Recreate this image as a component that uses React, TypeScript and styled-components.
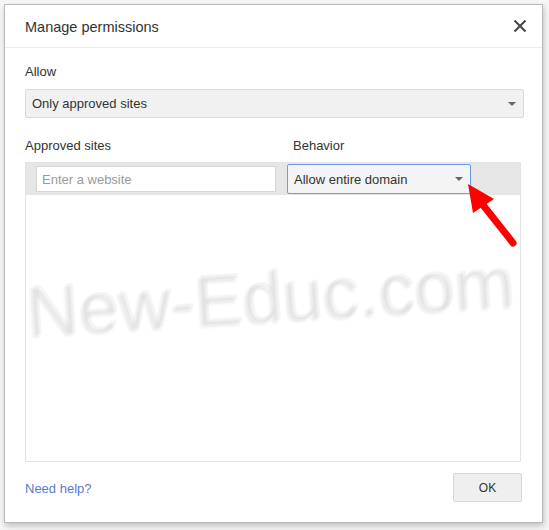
import React from "react";
import styled, { createGlobalStyle } from "styled-components";

const Global = createGlobalStyle`
  html, body { margin: 0; padding: 0; background: #f6f6f6; }
  body { font-family: "Liberation Sans", Arial, sans-serif; }
`;

const Page = styled.div`
  position: relative;
  width: 549px;
  height: 530px;
  padding: 4px 0 0 4px;
  box-sizing: border-box;
  overflow: hidden;
`;

const Dialog = styled.div`
  width: 539px;
  height: 519px;
  box-sizing: border-box;
  background: #fff;
  border: 1px solid #b9b9b9;
  box-shadow: 1px 3px 6px rgba(0, 0, 0, 0.22);
  display: flex;
  flex-direction: column;
`;

const Header = styled.div`
  height: 42px;
  display: flex;
  align-items: center;
  justify-content: space-between;
  padding: 0 14px 0 20px;
  border-bottom: 1px solid #ededed;
`;

const Title = styled.div`
  font-size: 14.5px;
  color: #333;
  padding-top: 2px;
`;

const Close = styled.button`
  border: none;
  background: none;
  padding: 0;
  width: 16px;
  height: 16px;
  display: flex;
  align-items: center;
  justify-content: center;
  cursor: pointer;
`;

const Body = styled.div`
  flex: 1;
  display: flex;
  flex-direction: column;
  padding: 0 18px 0 20px;
`;

const Label = styled.div<{ $top: number }>`
  font-size: 13px;
  color: #333;
  margin-top: ${(p) => p.$top}px;
  line-height: 16px;
`;

const Select = styled.div<{ $focused?: boolean }>`
  box-sizing: border-box;
  display: flex;
  align-items: center;
  justify-content: space-between;
  font-size: 13px;
  color: #333;
  background: ${(p) => (p.$focused ? "#f4f4f4" : "#f1f1f1")};
  border: 1px solid ${(p) => (p.$focused ? "#6d9be8" : "#dadada")};
  border-radius: 2px;
  padding: 0 7px 0 6px;
`;

const TopSelect = styled(Select)`
  margin-top: 9px;
  height: 29px;
`;

const Caret = styled.span`
  width: 0;
  height: 0;
  border-left: 4px solid transparent;
  border-right: 4px solid transparent;
  border-top: 4px solid #666;
`;

const Columns = styled.div`
  display: grid;
  grid-template-columns: 268px 1fr;
  margin-top: 20px;
  width: 496px;
`;

const List = styled.div`
  position: relative;
  margin-top: 8px;
  width: 496px;
  height: 300px;
  box-sizing: border-box;
  border: 1px solid #e3e3e3;
  display: flex;
  flex-direction: column;
`;

const ListHead = styled.div`
  height: 32px;
  background: #e6e6e6;
  display: grid;
  grid-template-columns: 240px 184px;
  column-gap: 11px;
  align-items: center;
  padding-left: 10px;
`;

const Input = styled.div`
  box-sizing: border-box;
  height: 26px;
  background: #fff;
  border: 1px solid #d6d6d6;
  font-size: 13px;
  color: #9a9a9a;
  display: flex;
  align-items: center;
  padding-left: 5px;
`;

const BehaviorSelect = styled(Select)`
  height: 30px;
`;

const Watermark = styled.div`
  position: absolute;
  left: 5px;
  top: 106px;
  font-size: 72px;
  line-height: 82px;
  color: rgba(0, 0, 0, 0.035);
  text-shadow: -3px 3px 3px rgba(0, 0, 0, 0.08);
  transform: rotate(-3.5deg);
  transform-origin: left bottom;
  white-space: nowrap;
  pointer-events: none;
`;

const Footer = styled.div`
  display: flex;
  align-items: center;
  justify-content: space-between;
  margin-top: 11px;
  width: 497px;
`;

const Help = styled.a`
  font-size: 13px;
  color: #5b78d8;
  text-decoration: none;
  margin-top: 2px;
`;

const OkButton = styled.button`
  width: 69px;
  height: 29px;
  box-sizing: border-box;
  background: #efefef;
  border: 1px solid #d7d7d7;
  border-radius: 2px;
  font-family: "Liberation Sans", Arial, sans-serif;
  font-size: 12px;
  color: #333;
`;

const Arrow = styled.svg`
  position: absolute;
  left: 0;
  top: 0;
  pointer-events: none;
`;

export default function App() {
  return (
    <>
      <Global />
      <Page>
        <Dialog>
          <Header>
            <Title>Manage permissions</Title>
            <Close aria-label="close">
              <svg width="14" height="14" viewBox="0 0 14 14">
                <path d="M1.5 1.5 L12.5 12.5 M12.5 1.5 L1.5 12.5" stroke="#444" strokeWidth="2" />
              </svg>
            </Close>
          </Header>
          <Body>
            <Label $top={16}>Allow</Label>
            <TopSelect>
              <span>Only approved sites</span>
              <Caret />
            </TopSelect>
            <Columns>
              <Label $top={0}>Approved sites</Label>
              <Label $top={0}>Behavior</Label>
            </Columns>
            <List>
              <ListHead>
                <Input>Enter a website</Input>
                <BehaviorSelect $focused>
                  <span>Allow entire domain</span>
                  <Caret />
                </BehaviorSelect>
              </ListHead>
              <Watermark>New-Educ.com</Watermark>
            </List>
            <Footer>
              <Help href="#">Need help?</Help>
              <OkButton>OK</OkButton>
            </Footer>
          </Body>
        </Dialog>
        <Arrow width="549" height="530" viewBox="0 0 549 530">
          <line x1="513" y1="243" x2="483" y2="205" stroke="#f00" strokeWidth="7" strokeLinecap="round" />
          <polygon points="468,184 473,213 494,199" fill="#f00" />
        </Arrow>
      </Page>
    </>
  );
}
